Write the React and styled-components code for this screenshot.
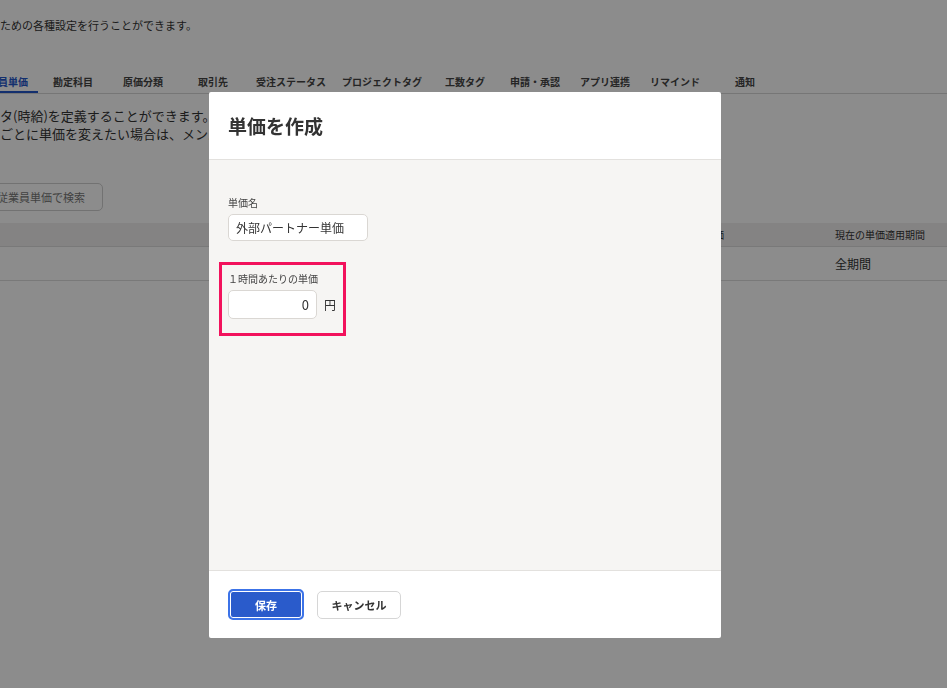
import React from "react";
import styled, { createGlobalStyle } from "styled-components";

const GlobalStyle = createGlobalStyle`
  html, body {
    margin: 0;
    padding: 0;
    background: #fff;
    font-family: "Noto Sans CJK JP", "Noto Sans", sans-serif;
    color: #333;
  }
  * {
    box-sizing: border-box;
  }
`;

const Page = styled.div`
  width: 947px;
  height: 688px;
  overflow: hidden;
  padding-top: 17px;
`;

const Lead = styled.p`
  margin: 0;
  font-size: 11px;
  line-height: 16px;
  color: #333;
`;

const Tabs = styled.nav`
  display: flex;
  margin: 38px 0 0 -32px;
  border-bottom: 1px solid #d8d8d8;
  width: calc(100% + 32px);
`;

const Tab = styled.div`
  min-width: 70px;
  padding: 0 8px;
  height: 22px;
  line-height: 22px;
  text-align: center;
  font-size: 10px;
  font-weight: 700;
  white-space: nowrap;
  color: ${(p) => (p.$active ? "#2456c9" : "#444")};
  box-shadow: ${(p) => (p.$active ? "inset 0 -2px 0 #2456c9" : "none")};
`;

const Description = styled.div`
  margin-top: 13px;
  font-size: 13px;
  line-height: 18px;
  white-space: nowrap;
`;

const Search = styled.input`
  display: block;
  margin: 40px 0 0 -16px;
  width: 119px;
  height: 28px;
  padding: 0 12px;
  border: 1px solid #cfcfcf;
  border-radius: 5px;
  font-family: inherit;
  font-size: 11px;
  background: #fff;
  &::placeholder {
    color: #777;
  }
`;

const Table = styled.div`
  margin-top: 12px;
`;

const Row = styled.div`
  display: grid;
  grid-template-columns: 1fr 161px 124px;
  align-items: center;
  height: ${(p) => (p.$head ? "24px" : "34px")};
  background: ${(p) => (p.$head ? "#f1eeee" : "#fff")};
  border-bottom: 1px solid #dcdcdc;
  font-size: ${(p) => (p.$head ? "10px" : "12px")};
`;

const Cell = styled.div`
  padding: 0 12px;
  white-space: nowrap;
`;

const Overlay = styled.div`
  position: fixed;
  inset: 0;
  background: rgba(0, 0, 0, 0.45);
  display: flex;
  justify-content: center;
  align-items: flex-start;
  padding: 92px 17px 0 0;
`;

const Modal = styled.div`
  width: 512px;
  height: 546px;
  background: #fff;
  border-radius: 2px;
  display: flex;
  flex-direction: column;
  overflow: hidden;
`;

const ModalHeader = styled.header`
  height: 68px;
  flex-shrink: 0;
  display: flex;
  align-items: center;
  padding: 0 19px;
  border-bottom: 1px solid #e3e1de;
`;

const Title = styled.h2`
  margin: 0;
  font-size: 19px;
  font-weight: 700;
  color: #333;
`;

const ModalBody = styled.div`
  flex: 1;
  background: #f6f5f3;
  padding: 36px 19px;
  display: flex;
  flex-direction: column;
  align-items: flex-start;
`;

const Field = styled.div`
  display: flex;
  flex-direction: column;
  gap: 4px;
`;

const Label = styled.label`
  font-size: 10px;
  line-height: 14px;
  color: #444;
`;

const TextInput = styled.input`
  width: ${(p) => p.$width}px;
  height: ${(p) => p.$height}px;
  padding: 0 7px;
  border: 1px solid #dad7d3;
  border-radius: 5px;
  background: #fff;
  font-family: inherit;
  font-size: ${(p) => p.$size || 12}px;
  color: #333;
  text-align: ${(p) => p.$align || "left"};
`;

const Highlight = styled.div`
  margin: 21px 0 0 -9px;
  padding: 7px 7px 14px 6px;
  border: 3px solid #f2125c;
`;

const InputLine = styled.div`
  display: flex;
  align-items: center;
  gap: 7px;
`;

const Unit = styled.span`
  font-size: 12px;
  color: #333;
`;

const ModalFooter = styled.footer`
  height: 68px;
  flex-shrink: 0;
  border-top: 1px solid #e3e1de;
  display: flex;
  align-items: center;
  gap: 13px;
  padding: 0 19px;
`;

const Button = styled.button`
  height: ${(p) => (p.$primary ? "31px" : "28px")};
  width: ${(p) => (p.$primary ? "76px" : "84px")};
  padding: 0;
  border-radius: 5px;
  font-family: inherit;
  font-size: 11px;
  font-weight: 700;
  cursor: pointer;
  color: ${(p) => (p.$primary ? "#fff" : "#333")};
  background: ${(p) => (p.$primary ? "#2a5bcb" : "#fff")};
  border: ${(p) => (p.$primary ? "2px solid #3c73e8" : "1px solid #d6d6d6")};
  box-shadow: ${(p) => (p.$primary ? "inset 0 0 0 1px #fff" : "none")};
`;

const tabs = [
  "従業員単価",
  "勘定科目",
  "原価分類",
  "取引先",
  "受注ステータス",
  "プロジェクトタグ",
  "工数タグ",
  "申請・承認",
  "アプリ連携",
  "リマインド",
  "通知",
];

export default function App() {
  return (
    <>
      <GlobalStyle />
      <Page>
        <Lead>ための各種設定を行うことができます。</Lead>
        <Tabs>
          {tabs.map((t, i) => (
            <Tab key={t} $active={i === 0}>
              {t}
            </Tab>
          ))}
        </Tabs>
        <Description>
          <div>タ(時給)を定義することができます。</div>
          <div>ごとに単価を変えたい場合は、メンバー設定から変更してください。</div>
        </Description>
        <Search placeholder="従業員単価で検索" />
        <Table>
          <Row $head>
            <Cell></Cell>
            <Cell>現在の単価</Cell>
            <Cell>現在の単価適用期間</Cell>
          </Row>
          <Row>
            <Cell></Cell>
            <Cell>0円</Cell>
            <Cell>全期間</Cell>
          </Row>
        </Table>
      </Page>
      <Overlay>
        <Modal>
          <ModalHeader>
            <Title>単価を作成</Title>
          </ModalHeader>
          <ModalBody>
            <Field>
              <Label>単価名</Label>
              <TextInput $width={140} $height={27} defaultValue="外部パートナー単価" />
            </Field>
            <Highlight>
              <Field>
                <Label>１時間あたりの単価</Label>
                <InputLine>
                  <TextInput $width={89} $height={29} $size={13} $align="right" defaultValue="0" />
                  <Unit>円</Unit>
                </InputLine>
              </Field>
            </Highlight>
          </ModalBody>
          <ModalFooter>
            <Button $primary>保存</Button>
            <Button>キャンセル</Button>
          </ModalFooter>
        </Modal>
      </Overlay>
    </>
  );
}
